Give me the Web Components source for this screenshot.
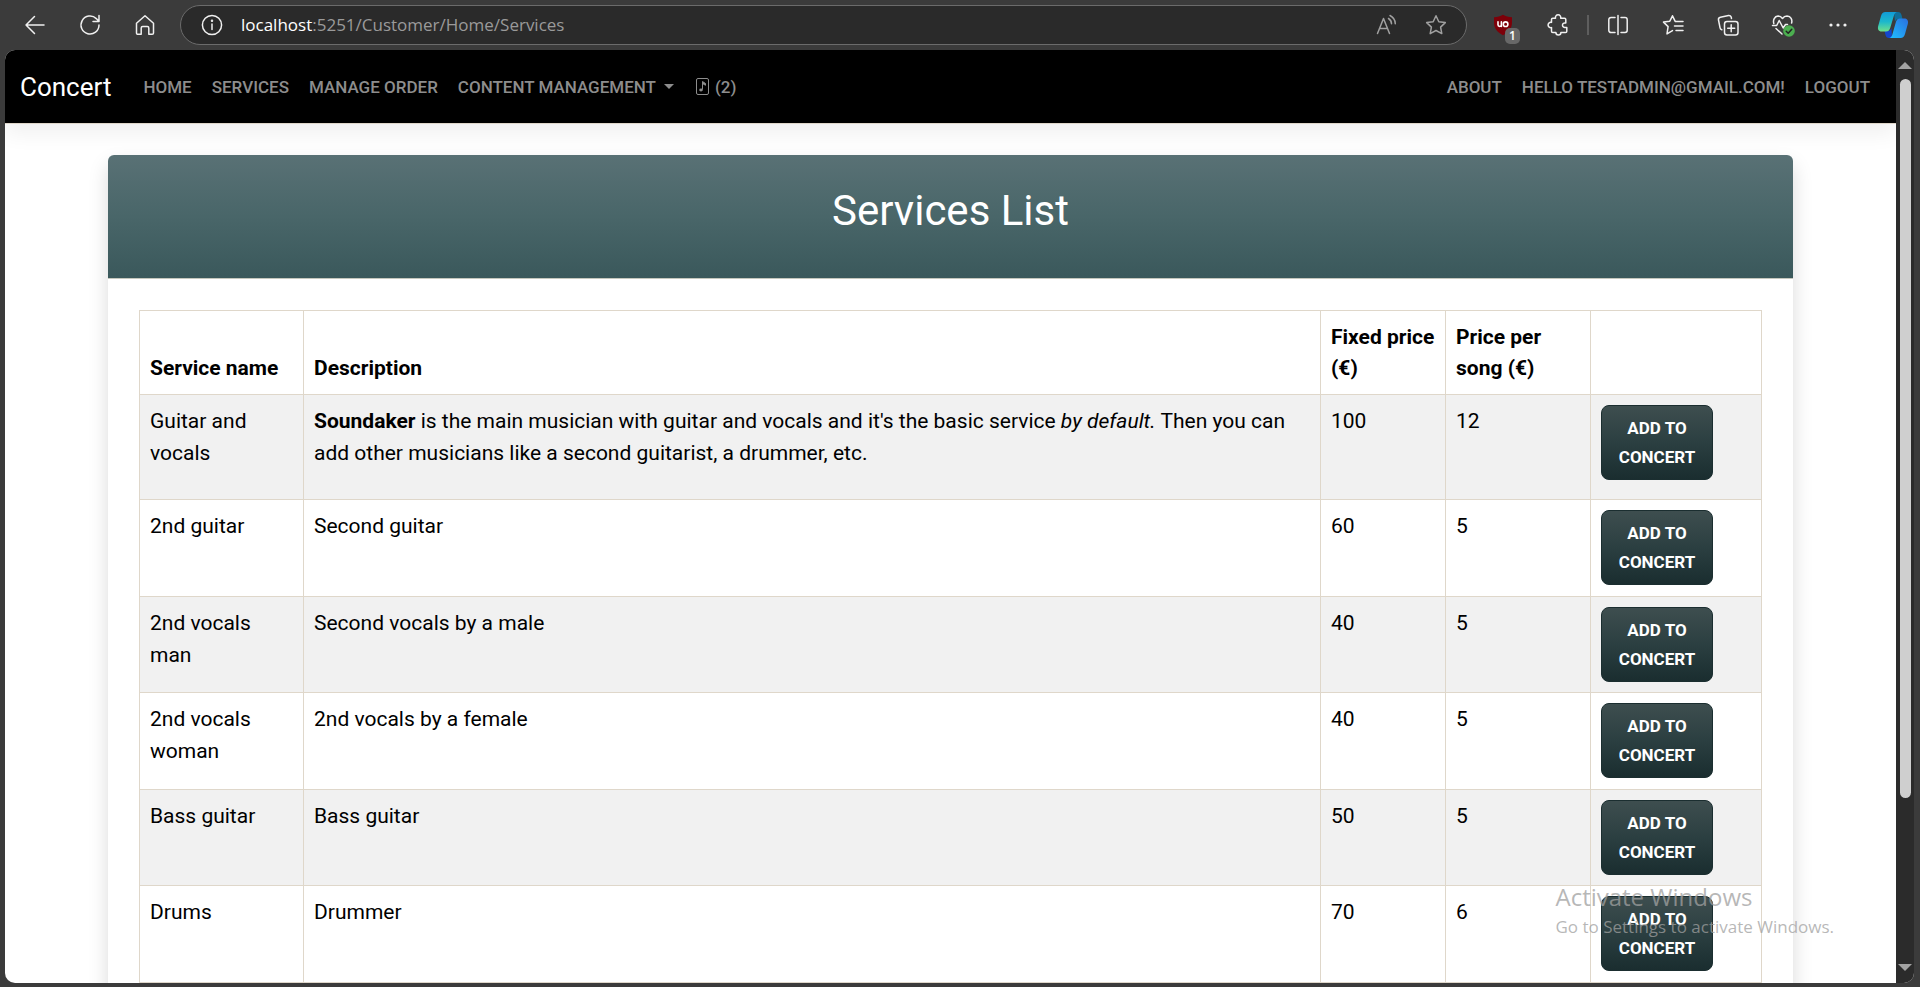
<!DOCTYPE html>
<html lang="en">
<head>
<meta charset="utf-8">
<title>Services List - Concert</title>
<style>
  body { margin: 0; font-family: Roboto, "Liberation Sans", sans-serif; }
</style>
</head>
<body>
<browser-window>
  <browser-toolbar slot="toolbar" host="localhost" path=":5251/Customer/Home/Services"></browser-toolbar>
  <site-navbar></site-navbar>
  <service-card heading="Services List">
    <service-table></service-table>
  </service-card>
  <activation-notice slot="overlay"></activation-notice>
</browser-window>

<script>
class BrowserWindow extends HTMLElement {
  constructor() {
    super();
    this.attachShadow({ mode: 'open' }).innerHTML = `
      <style>
        :host { display: flex; flex-direction: column; height: 100vh; background: #3b3b3b; position: relative; overflow: hidden; }
        .frame { flex: 1; min-height: 0; display: flex; margin: 0 6px 4px 5px; border-radius: 10px; overflow: hidden; background: #fff; }
        main { flex: 1; min-width: 0; overflow: hidden; }
        .scroll { width: 18px; background: #2b2b2b; display: flex; flex-direction: column; align-items: center; padding: 12px 0; box-sizing: border-box; }
        .track { flex: 1; width: 11px; margin: 10px 0 8px; }
        .thumb { height: 82%; border-radius: 6px; background: #cfcfcf; }
        svg { display: block; }
      </style>
      <slot name="toolbar"></slot>
      <div class="frame">
        <main><slot></slot></main>
        <div class="scroll" aria-hidden="true">
          <svg width="14" height="7" viewBox="0 0 14 7"><path d="M7 0l7 7H0z" fill="#a3a3a3"/></svg>
          <div class="track"><div class="thumb"></div></div>
          <svg width="14" height="7" viewBox="0 0 14 7"><path d="M0 0h14L7 7z" fill="#a3a3a3"/></svg>
        </div>
      </div>
      <slot name="overlay"></slot>`;
  }
}

class BrowserToolbar extends HTMLElement {
  constructor() {
    super();
    this.attachShadow({ mode: 'open' }).innerHTML = `
      <style>
        :host { display: flex; align-items: center; height: 50px; flex: none; padding-left: 7px; box-sizing: border-box; color: #f0f0f0; font-family: "Open Sans", "Noto Sans", sans-serif; }
        button { all: unset; flex: none; width: 55px; height: 48px; display: flex; align-items: center; justify-content: center; position: relative; }
        svg { display: block; fill: none; stroke: currentColor; stroke-width: 1.5; stroke-linecap: round; stroke-linejoin: round; }
        form { flex: 1; min-width: 0; display: flex; align-items: center; height: 40px; box-sizing: border-box; margin: 0 8px; border: 1px solid #6b6b6b; border-radius: 20px; background: #2a2a2a; padding: 0 6px 0 20px; }
        .url { flex: 1; margin-left: 18px; font-size: 17px; line-height: 24px; white-space: nowrap; color: #9a9a9a; }
        .url b { font-weight: 400; color: #fff; }
        form button { width: 49px; height: 36px; color: #a0a0a0; }
        form button.info { width: 22px; color: #f0f0f0; }
        .sep { width: 2px; height: 20px; margin: 0 1px 0 2px; background: #5e5e5e; }
        .badge { position: absolute; left: 30px; bottom: 5px; width: 15px; height: 16px; border-radius: 5px; background: #686868; color: #fff; font-size: 12px; line-height: 16px; font-weight: 600; text-align: center; }
      </style>
      <button aria-label="Back"><svg width="22" height="22" viewBox="0 0 22 22"><path d="M20 11H2M10.500 2.500L2 11l8.500 8.500"/></svg></button>
      <button aria-label="Reload"><svg width="22" height="22" viewBox="0 0 22 22"><path d="M20 11a9 9 0 1 1-2.700-6.400L19.500 7M20 1.500V7.500h-6"/></svg></button>
      <button aria-label="Home"><svg width="22" height="22" viewBox="0 0 22 22"><path d="M2.500 9.300L11 1.800l8.500 7.500V19a1.300 1.300 0 0 1-1.300 1.300h-3.400V14a1.500 1.500 0 0 0-1.500-1.500H8.700A1.500 1.500 0 0 0 7.200 14v6.300H3.800A1.300 1.300 0 0 1 2.500 19z"/></svg></button>
      <form>
        <button type="button" class="info" aria-label="Site information"><svg width="22" height="22" viewBox="0 0 22 22"><circle cx="11" cy="11" r="9.600"/><path d="M11 10v5.500"/><circle cx="11" cy="6.800" r=".5" fill="currentColor"/></svg></button>
        <div class="url"><b></b><span></span></div>
        <button type="button" aria-label="Read aloud"><svg width="22" height="22" viewBox="0 0 22 22"><path d="M1.500 19.500L7.500 4.500l6 15M3.600 14.500h7.800M12.500 4.500c2 1.200 3 3 3 5.300M14 1.500c3.500 1.800 5.300 4.500 5.300 8.300"/></svg></button>
        <button type="button" aria-label="Add to favorites"><svg width="22" height="22" viewBox="0 0 22 22"><path d="M11 1.800l2.800 5.900 6.500.9-4.700 4.500 1.200 6.500-5.800-3.100-5.800 3.100 1.200-6.500L1.700 8.600l6.500-.9z"/></svg></button>
      </form>
      <button aria-label="Ad blocker"><svg width="22" height="22" viewBox="0 0 22 22"><path d="M11 .8c2.700 1.500 5.500 2.300 9 2.500v5c0 6-3.300 10-9 13-5.700-3-9-7-9-13v-5c3.500-.2 6.300-1 9-2.500z" fill="#7d0009" stroke="none"/><path d="M6 7.800v2.900a1.700 1.700 0 0 0 3.400 0V7.800M9.400 7.800v4.600" stroke="#fff" stroke-width="1.600"/><circle cx="13.600" cy="10.200" r="2.300" stroke="#fff" stroke-width="1.600"/></svg><span class="badge">1</span></button>
      <button aria-label="Extensions"><svg width="22" height="22" viewBox="0 0 22 22"><path d="M5.800 4.200h2.700a2.700 2.700 0 1 1 5.200 0h3.800a1.300 1.300 0 0 1 1.300 1.300v3.400h-1a2.300 2.300 0 1 0 0 4.600h2v3.700a1.300 1.300 0 0 1-1.300 1.300h-4.600a2.500 2.500 0 0 1-5 0H5.800a1.300 1.300 0 0 1-1.300-1.300v-3.600a2.700 2.700 0 1 1 0-5.200V5.500a1.300 1.300 0 0 1 1.300-1.300z"/></svg></button>
      <span class="sep"></span>
      <button aria-label="Split screen"><svg width="22" height="22" viewBox="0 0 22 22"><path d="M11 1.500v19M8 3.500H4A2.200 2.200 0 0 0 1.800 5.700v10.600A2.200 2.200 0 0 0 4 18.500h4M14 3.500h4a2.200 2.200 0 0 1 2.200 2.200v10.600a2.200 2.200 0 0 1-2.200 2.200h-4"/></svg></button>
      <button aria-label="Favorites"><svg width="22" height="22" viewBox="0 0 22 22"><path d="M14.500 7.600l-1.300-.2L10.500 1.800 7.800 7.200l-6.300.9 4.600 4.500-1.100 7.300 5.500-3.300M14.500 7.600H21M12.500 12H21M14 16.500h7"/></svg></button>
      <button aria-label="Collections"><svg width="22" height="22" viewBox="0 0 22 22"><rect x="7.500" y="7.500" width="13.500" height="13.500" rx="2.500"/><path d="M14.200 10.700v7M10.700 14.200h7M4.800 15.800A2.500 2.500 0 0 1 3 13.600L1.500 6A2.400 2.400 0 0 1 3.400 3.200L11.500 1.500a2.400 2.400 0 0 1 2.800 2l.2 1"/></svg></button>
      <button aria-label="Browser essentials"><svg width="24" height="24" viewBox="0 0 24 24"><path d="M2.800 10.500C1.800 7 3.500 3.300 7 3c2 0 3.500 1 4.500 2.500C12.500 4 14 3 16 3c4 .3 5.500 4 4.600 7M1.500 12.500h4.200l2.500-5 4 7.500 2.300-3.500h2M5 15.500l6 5.500"/><circle cx="18" cy="18" r="5.800" fill="#4caf50" stroke="none"/><path d="M15.200 18.200l2 2 3.600-4" stroke="#222"/></svg></button>
      <button aria-label="Settings and more"><svg width="22" height="22" viewBox="0 0 22 22"><g fill="currentColor" stroke="none"><circle cx="4" cy="11" r="1.600"/><circle cx="11" cy="11" r="1.600"/><circle cx="18" cy="11" r="1.600"/></g></svg></button>
      <button aria-label="Copilot"><svg width="32" height="28" viewBox="0 0 32 28">
        <defs>
          <linearGradient id="a" x1="0" y1="0" x2="0" y2="1"><stop offset="0" stop-color="#119bd8"/><stop offset=".5" stop-color="#1cb8cc"/><stop offset="1" stop-color="#6fe08a"/></linearGradient>
          <linearGradient id="b" x1="1" y1="0" x2="0" y2="1"><stop offset="0" stop-color="#2a6fe0"/><stop offset="1" stop-color="#1fc0ff"/></linearGradient>
        </defs>
        <g stroke="none">
          <path d="M17 1h4c2 0 3 1.200 3.500 3l1 4h-4c-2 0-3 1-3.500 3z" fill="#0f6f9c"/>
          <path d="M15 27h-3c-2 0-3-1-3.500-3l-1-4h3c2.500 0 3.500-1.500 4-3z" fill="#1446cc"/>
          <path d="M8.500 1H20c-2 .5-2.600 2-3.200 4l-3.600 12c-.8 2.400-2 3.500-4.200 3.500H4.500C1.500 20.500.4 18 1.200 15L4 5C4.800 2.400 6 1 8.500 1z" fill="url(#a)"/>
          <path d="M23.500 27H12.300c2-.5 2.600-2 3.200-4l3.400-12c.8-2.400 2-3.500 4.200-3.500h4.400c3 0 4.100 2.500 3.300 5.500L28 23c-.8 2.600-2 4-4.500 4z" fill="url(#b)"/>
        </g></svg></button>`;
    this.shadowRoot.querySelector('.url b').textContent = this.getAttribute('host');
    this.shadowRoot.querySelector('.url span').textContent = this.getAttribute('path');
  }
}

class SiteNavbar extends HTMLElement {
  constructor() {
    super();
    this.attachShadow({ mode: 'open' }).innerHTML = `
      <style>
        :host { display: block; position: relative; z-index: 1; background: #000; border-bottom: 1px solid #dfd7ca; box-shadow: 0 10px 20px rgba(0,0,0,.06); }
        nav { display: flex; align-items: center; height: 73px; padding: 0 26px 0 15px; }
        a { color: #8d8d8d; text-decoration: none; font-size: 17px; line-height: 24px; font-weight: 500; text-transform: uppercase; white-space: nowrap; }
        .brand { color: #fff; font-size: 26px; line-height: 32px; font-weight: 400; text-transform: none; margin-right: 32px; }
        ul { display: flex; gap: 20px; list-style: none; margin: 0; padding: 0; }
        ul.end { margin-left: auto; }
        .caret { display: inline-block; margin-left: 8px; vertical-align: 4px; border: 5px solid transparent; border-top-color: currentColor; border-bottom: 0; }
        svg { vertical-align: -2px; margin: 0 6px 0 2px; fill: none; stroke: currentColor; }
      </style>
      <nav>
        <a class="brand" href="#">Concert</a>
        <ul>
          <li><a href="#">Home</a></li>
          <li><a href="#">Services</a></li>
          <li><a href="#">Manage Order</a></li>
          <li><a href="#" aria-haspopup="true">Content Management<span class="caret"></span></a></li>
          <li><a href="#" aria-label="Order (2)"><svg width="13" height="17" viewBox="0 0 13 17"><rect x=".5" y=".5" width="12" height="16" rx="1.500"/><path d="M6.500 11.500V3.500l3 2v1.800l-3-1.800" fill="currentColor"/><ellipse cx="5" cy="12" rx="1.800" ry="1.400" fill="currentColor" stroke="none"/></svg>(2)</a></li>
        </ul>
        <ul class="end">
          <li><a href="#">About</a></li>
          <li><a href="#">Hello testadmin@gmail.com!</a></li>
          <li><a href="#">Logout</a></li>
        </ul>
      </nav>`;
  }
}

class ServiceCard extends HTMLElement {
  constructor() {
    super();
    this.attachShadow({ mode: 'open' }).innerHTML = `
      <style>
        :host { display: block; margin: 31px 103px; border-radius: 6px; background: #fff; box-shadow: 0 10px 20px rgba(0,0,0,.15); }
        header { padding: 31px 0 42px; border-bottom: 1px solid #c5c7bd; border-radius: 6px 6px 0 0; background: linear-gradient(#597175, #496669 50%, #3a585b); }
        h1 { margin: 0; color: #fff; text-align: center; font-size: 42px; line-height: 50px; font-weight: 400; }
        .body { padding: 31px; }
      </style>
      <header><h1></h1></header>
      <div class="body"><slot></slot></div>`;
    this.shadowRoot.querySelector('h1').textContent = this.getAttribute('heading');
  }
}

const SERVICES = [
  ['Guitar and vocals', "<p><b>Soundaker</b> is the main musician with guitar and vocals and it's the basic service <i>by default.</i> Then you can add other musicians like a second guitarist, a drummer, etc.</p>", 100, 12],
  ['2nd guitar', 'Second guitar', 60, 5],
  ['2nd vocals man', 'Second vocals by a male', 40, 5],
  ['2nd vocals woman', '2nd vocals by a female', 40, 5],
  ['Bass guitar', 'Bass guitar', 50, 5],
  ['Drums', 'Drummer', 70, 6]
];

class ServiceTable extends HTMLElement {
  constructor() {
    super();
    const rows = SERVICES.map(([name, text, fixed, song]) => `
      <tr><td>${name}</td><td>${text}</td><td>${fixed}</td><td>${song}</td><td><add-button></add-button></td></tr>`).join('');
    this.attachShadow({ mode: 'open' }).innerHTML = `
      <style>
        :host { display: block; color: #000; font-size: 21px; line-height: 32px; }
        table { width: 100%; table-layout: fixed; border-collapse: collapse; }
        th, td { border: 1px solid #dfd7ca; padding: 10px 8px 9px 10px; text-align: left; vertical-align: top; box-sizing: border-box; }
        th { vertical-align: bottom; height: 84px; padding-bottom: 10px; font-weight: 700; line-height: 31px; white-space: nowrap; }
        td { height: 97px; }
        tbody tr:nth-child(odd) { background: #f1f1f1; }
        tbody tr:nth-child(odd) td { height: 96px; }
        tbody tr:first-child td { height: 105px; }
        p { margin: 0; }
        b { font-weight: 700; }
        .name { width: 164px; } .fixed { width: 125px; } .song { width: 145px; } .action { width: 171px; }
      </style>
      <table>
        <colgroup><col class="name"><col><col class="fixed"><col class="song"><col class="action"></colgroup>
        <thead><tr><th>Service name</th><th>Description</th><th>Fixed price<br>(€)</th><th>Price per<br>song (€)</th><th></th></tr></thead>
        <tbody>${rows}</tbody>
      </table>`;
  }
}

class AddButton extends HTMLElement {
  constructor() {
    super();
    this.attachShadow({ mode: 'open' }).innerHTML = `
      <style>
        :host { display: block; }
        button { display: block; width: 112px; height: 75px; box-sizing: border-box; padding: 0 16px; border: 1px solid #1b2e30; border-radius: 8px; background: linear-gradient(#3e4e4f, #2b3f41 50%, #1a2d2f); color: #fff; font: 700 17px/29px Roboto, "Liberation Sans", sans-serif; text-transform: uppercase; }
      </style>
      <button type="button">Add to concert</button>`;
  }
}

class ActivationNotice extends HTMLElement {
  constructor() {
    super();
    this.attachShadow({ mode: 'open' }).innerHTML = `
      <style>
        :host { position: absolute; z-index: 2; right: 86px; bottom: 47px; color: rgba(160,160,160,.75); font-family: "Open Sans", "Noto Sans", sans-serif; pointer-events: none; }
        div { font-size: 24px; line-height: 34px; }
        span { display: block; font-size: 17px; line-height: 26px; }
      </style>
      <div>Activate Windows</div>
      <span>Go to Settings to activate Windows.</span>`;
  }
}

customElements.define('add-button', AddButton);
customElements.define('service-table', ServiceTable);
customElements.define('service-card', ServiceCard);
customElements.define('site-navbar', SiteNavbar);
customElements.define('browser-toolbar', BrowserToolbar);
customElements.define('activation-notice', ActivationNotice);
customElements.define('browser-window', BrowserWindow);
</script>
</body>
</html>
